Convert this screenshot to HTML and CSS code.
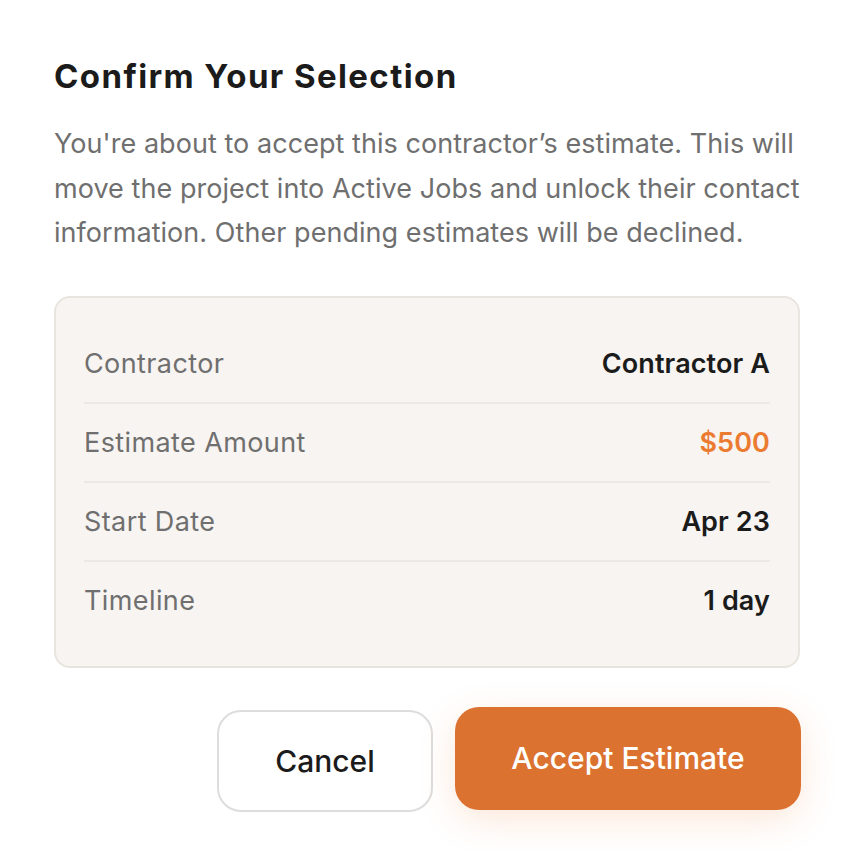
FILE: index.html
```html
<!DOCTYPE html>
<html lang="en">
<head>
<meta charset="utf-8">
<title>Confirm Your Selection</title>
<link rel="stylesheet" href="styles.css">
</head>
<body>
<div class="dialog">
  <h1 class="title">Confirm Your Selection</h1>
  <p class="desc">You're about to accept this contractor’s estimate. This will move the project into Active Jobs and unlock their contact information. Other pending estimates will be declined.</p>
  <div class="summary">
    <div class="row"><span class="label">Contractor</span><span class="value">Contractor A</span></div>
    <div class="row"><span class="label">Estimate Amount</span><span class="value accent">$500</span></div>
    <div class="row"><span class="label">Start Date</span><span class="value">Apr 23</span></div>
    <div class="row"><span class="label">Timeline</span><span class="value">1 day</span></div>
  </div>
  <div class="actions">
    <button class="btn btn-cancel">Cancel</button>
    <button class="btn btn-accept">Accept Estimate</button>
  </div>
</div>
</body>
</html>
```

FILE: styles.css
```css
* { box-sizing: border-box; }
html, body { margin: 0; padding: 0; background: #ffffff; }
body { font-family: Inter, "Noto Sans", sans-serif; color: #1b1b1b; }
.dialog { padding: 56px 53px 40px 54px; }
.title { margin: 0; font-size: 33px; font-weight: 700; line-height: 40px; letter-spacing: 1.4px; color: #1b1b1b; }
.desc { margin: 26px 0 0 0; font-size: 27px; line-height: 44.5px; letter-spacing: 0.05px; color: #6f6f6f; font-weight: 400; }
.summary { margin-top: 40px; margin-right: 1px; background: #f7f4f1; border: 2px solid #e8e4de; border-radius: 16px; padding: 27px 28px; }
.row { display: flex; justify-content: space-between; align-items: center; padding: 20px 0; border-bottom: 2px solid #ece8e3; line-height: 37px; }
.row:last-child { border-bottom: none; }
.label { font-size: 27px; letter-spacing: 0.4px; color: #6f6f6f; }
.value { font-size: 27px; font-weight: 600; letter-spacing: 0.1px; color: #1b1b1b; }
.value.accent { color: #ec7b32; }
.actions { display: flex; justify-content: flex-end; gap: 22px; margin-top: 42px; align-items: flex-start; }
.btn { font-family: inherit; font-size: 30px; font-weight: 500; line-height: 38px; border-radius: 24px; cursor: pointer; }
.btn-cancel { background: #ffffff; color: #1b1b1b; border: 2px solid #dddddd; padding: 0 40px; width: 216px; height: 102px; }
.btn-accept { background: #dc7230; color: #ffffff; border: none; width: 346px; height: 103px; padding: 0 40px; transform: translateY(-3px); box-shadow: 0 10px 36px rgba(236, 123, 50, 0.18); }
```
